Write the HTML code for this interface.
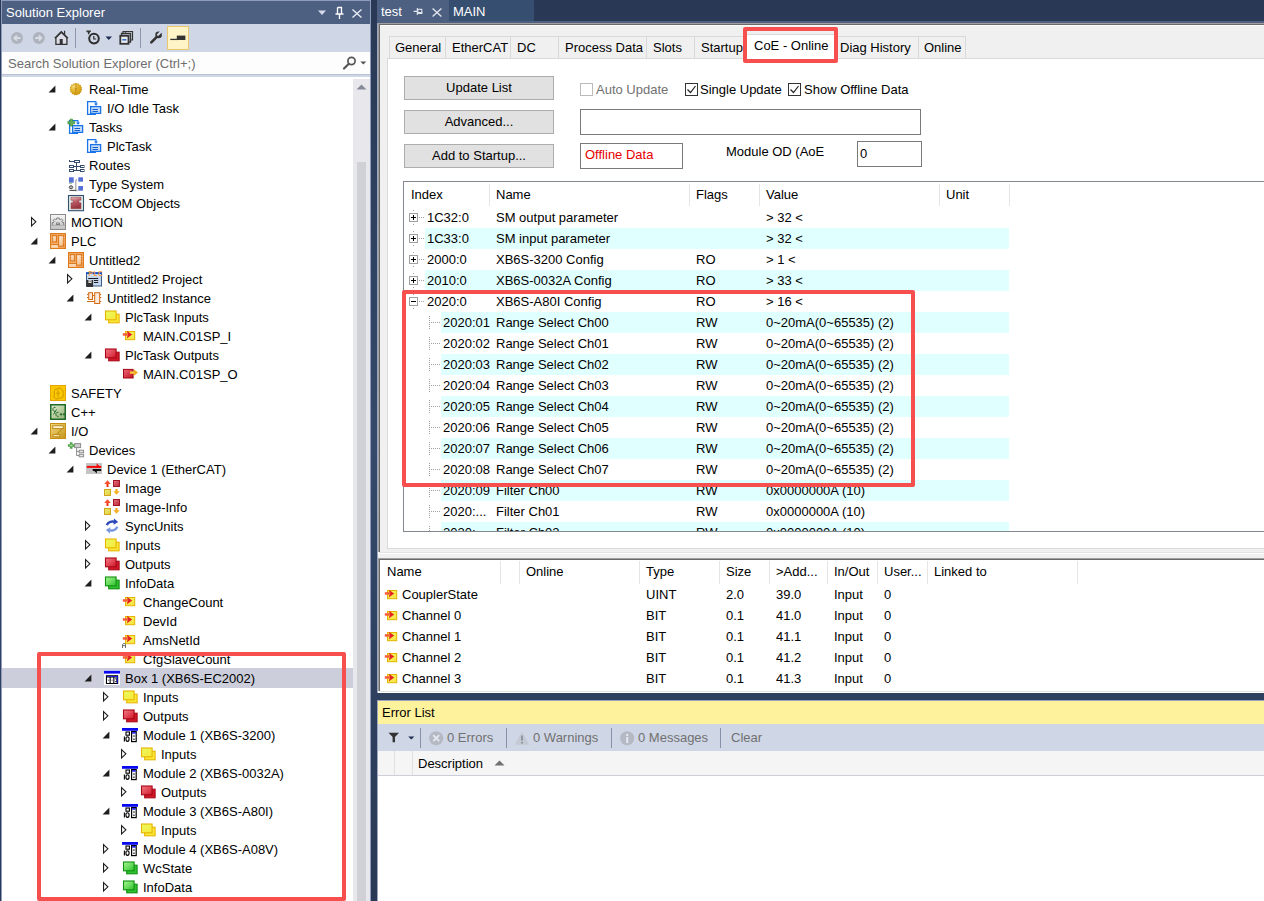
<!DOCTYPE html><html><head><meta charset="utf-8"><title>TwinCAT</title><style>
*{margin:0;padding:0;box-sizing:border-box}
html,body{width:1264px;height:901px;overflow:hidden;background:linear-gradient(#293955,#35496A 50%,#293955);font-family:"Liberation Sans",sans-serif;font-size:13px;color:#000}
.a{position:absolute}
.t{position:absolute;white-space:nowrap;line-height:19px;height:19px}
svg{position:absolute;overflow:visible}
</style></head><body>
<div class="a" style="left:1px;top:0px;width:370px;height:901px;background:#8E9BBC"></div>
<div class="a" style="left:2px;top:1px;width:368px;height:23px;background:#4D6082"></div>
<div class="t" style="left:6px;top:3px;line-height:19px;height:19px;color:#fff">Solution Explorer</div>
<svg style="left:318px;top:10px" width="9" height="6" viewBox="0 0 9 6"><path d="M0 0.5h8l-4 4.5z" fill="#D6DBE9"/></svg>
<svg style="left:335px;top:7px" width="9" height="12" viewBox="0 0 9 12"><path d="M2.5 0.5h4v6M2.5 0.5v6M0.5 7h8M4.5 7v5" stroke="#fff" stroke-width="1.3" fill="none"/><rect x="2.5" y="0.5" width="4" height="6.5" fill="#fff" fill-opacity="0.0"/></svg>
<svg style="left:352px;top:9px" width="10" height="9" viewBox="0 0 10 9"><path d="M0.5 0.5l9 8M9.5 0.5l-9 8" stroke="#E8EBF2" stroke-width="1.4"/></svg>
<div class="a" style="left:2px;top:24px;width:368px;height:28px;background:#CFD6E5"></div>
<svg style="left:10px;top:31px" width="14" height="14" viewBox="0 0 14 14"><circle cx="7" cy="7" r="6" fill="#AEB3BE"/><path d="M10.5 7h-6M7 4.3L4.2 7 7 9.7" stroke="#D8DCE4" stroke-width="1.8" fill="none"/></svg>
<svg style="left:32px;top:31px" width="14" height="14" viewBox="0 0 14 14"><circle cx="6.8" cy="7" r="6" fill="#AEB3BE"/><path d="M3.3 7h6M6.8 4.3L9.6 7 6.8 9.7" stroke="#D8DCE4" stroke-width="1.8" fill="none"/></svg>
<svg style="left:54px;top:30px" width="15" height="16" viewBox="0 0 15 16"><path d="M1.9 14.3V7.6L7.3 2.2 12.9 7.6V14.3z" fill="#DCDCE8" stroke="#333" stroke-width="1.3"/><path d="M0.8 8.3L7.3 1.7 13.8 8.3" fill="none" stroke="#333" stroke-width="1.5"/><path d="M10.6 0.8v4" stroke="#333" stroke-width="1.2"/><rect x="5.7" y="9" width="3" height="5.6" fill="#333"/></svg>
<div class="a" style="left:75px;top:28px;width:1px;height:20px;background:#8A97AE"></div>
<svg style="left:86px;top:30px" width="16" height="16" viewBox="0 0 16 16"><path d="M0.3 1.2h4.6M2.6 1.2v3" stroke="#333" stroke-width="1.3"/><path d="M0.8 1.3L4.6 1.3 2.7 4z" fill="#333"/><circle cx="8" cy="8.6" r="4.8" fill="none" stroke="#2D2D2D" stroke-width="2"/><path d="M7.8 6v3h2.4" stroke="#2D2D2D" stroke-width="1.2" fill="none"/></svg>
<svg style="left:105px;top:36px" width="8" height="5" viewBox="0 0 8 5"><path d="M0.5 0.5h6.5L3.75 4z" fill="#1E2D50"/></svg>
<svg style="left:119px;top:30px" width="15" height="15" viewBox="0 0 15 15"><path d="M4 4V1.5h9.5V10H11M6.5 2.8V1.5" stroke="#333" stroke-width="1.2" fill="none"/><path d="M2.5 6.5V3.5h9V12H9" stroke="#333" stroke-width="1.3" fill="none"/><rect x="1.3" y="5.8" width="8.2" height="8" fill="#E8EAF0" stroke="#333" stroke-width="1.8"/><path d="M3.3 9.8h4" stroke="#2060C0" stroke-width="1.4"/></svg>
<div class="a" style="left:140px;top:28px;width:1px;height:20px;background:#8A97AE"></div>
<svg style="left:150px;top:31px" width="13" height="13" viewBox="0 0 13 13"><path d="M1.3 11.3L6.3 6.3" stroke="#333" stroke-width="2.6" stroke-linecap="round"/><circle cx="8.6" cy="3.9" r="3.3" fill="#333"/><path d="M8 3.8L11.5 0.3" stroke="#CFD6E5" stroke-width="2.2" stroke-linecap="round"/></svg>
<div class="a" style="left:167px;top:26px;width:22px;height:24px;background:#FFF3C8;border:1px solid #E8C770"></div>
<svg style="left:170px;top:35px" width="16" height="6" viewBox="0 0 16 6"><rect x="6.8" y="0.6" width="8.6" height="4.4" fill="#333"/><path d="M0.3 4.4h8" stroke="#333" stroke-width="1.3"/></svg>
<div class="a" style="left:2px;top:52px;width:368px;height:22px;background:#FDFDFD"></div>
<div class="t" style="left:8px;top:54px;line-height:19px;height:19px;color:#6D6D6D">Search Solution Explorer (Ctrl+;)</div>
<svg style="left:342px;top:55px" width="16" height="16" viewBox="0 0 16 16"><circle cx="9.5" cy="6" r="3.6" fill="none" stroke="#555" stroke-width="1.7"/><path d="M2 13.5L6.6 9" stroke="#555" stroke-width="2.2" stroke-linecap="round"/></svg>
<svg style="left:360px;top:61px" width="7" height="5" viewBox="0 0 7 5"><path d="M0.3 0.5h6L3.3 3.5z" fill="#555"/></svg>
<div class="a" style="left:2px;top:74px;width:368px;height:1px;background:#BAC1D0"></div>
<div class="a" style="left:2px;top:75px;width:368px;height:2px;background:#CFD6E5"></div>
<div class="a" style="left:2px;top:77px;width:368px;height:824px;background:#fff"></div>
<div class="a" style="left:353px;top:79px;width:17px;height:822px;background:#E8E8EC"></div>
<div class="a" style="left:357px;top:162px;width:9px;height:739px;background:#D0D1D7"></div>
<svg style="left:356px;top:84px" width="11" height="6" viewBox="0 0 11 6"><path d="M0.5 5.5l5-5 5 5z" fill="#868999"/></svg>
<div class="a" style="left:2px;top:77px;width:351px;height:824px;overflow:hidden">
<svg style="left:46px;top:8px" width="8" height="8"><path d="M7.4 0.6V7.4H0.6z" fill="#1E1E1E"/></svg>
<svg style="left:66px;top:4px" width="16" height="16" viewBox="0 0 16 16"><defs><radialGradient id="gg" cx="0.35" cy="0.3" r="0.75"><stop offset="0" stop-color="#F8E08A"/><stop offset="0.45" stop-color="#E4B42C"/><stop offset="1" stop-color="#CC9A10"/></radialGradient></defs><circle cx="7.9" cy="8.1" r="5.7" fill="url(#gg)"/><circle cx="7.9" cy="8.1" r="5.6" fill="none" stroke="#CF9A14" stroke-width="1.1" stroke-dasharray="1.3 1.0"/><path d="M7.9 2.4v11.4M6.6 6.8l1.3 1.6 1.3-1.6" stroke="#C08A14" stroke-width="0.9" fill="none"/></svg>
<div class="t" style="left:87px;top:3px">Real-Time</div>
<svg style="left:84px;top:23px" width="16" height="16" viewBox="0 0 16 16"><path d="M10 1.6H1.6V14.4H10" stroke="#1874E8" stroke-width="1.3" fill="none"/><rect x="4.6" y="6.6" width="10" height="6.8" fill="#C8DCF8" stroke="#1874E8" stroke-width="1.3"/><path d="M6.5 9.5h5.5M6.5 11.5h5.5" stroke="#1060D0" stroke-width="1.1"/><path d="M10 1.2v3.6" stroke="#1874E8" stroke-width="1.2"/><path d="M8 3.6h4l-2 2.2z" fill="#1874E8"/></svg>
<div class="t" style="left:105px;top:22px">I/O Idle Task</div>
<svg style="left:46px;top:46px" width="8" height="8"><path d="M7.4 0.6V7.4H0.6z" fill="#1E1E1E"/></svg>
<svg style="left:66px;top:42px" width="16" height="16" viewBox="0 0 16 16"><path d="M10 1.6H1.6V14.4H10" stroke="#1874E8" stroke-width="1.3" fill="none"/><rect x="4.6" y="6.6" width="10" height="6.8" fill="#C8DCF8" stroke="#1874E8" stroke-width="1.3"/><path d="M6.5 9.5h5.5M6.5 11.5h5.5" stroke="#1060D0" stroke-width="1.1"/><path d="M10 1.2v3.6" stroke="#1874E8" stroke-width="1.2"/><path d="M8 3.6h4l-2 2.2z" fill="#1874E8"/><path d="M2.1 0.2h2.4v2.2h2.2v2.4H4.5v2.2H2.1V4.8H-0.1V2.4h2.2z" fill="#62B058" stroke="#3C8C36" stroke-width="0.7"/></svg>
<div class="t" style="left:87px;top:41px">Tasks</div>
<svg style="left:84px;top:61px" width="16" height="16" viewBox="0 0 16 16"><path d="M10 1.6H1.6V14.4H10" stroke="#1874E8" stroke-width="1.3" fill="none"/><rect x="4.6" y="6.6" width="10" height="6.8" fill="#C8DCF8" stroke="#1874E8" stroke-width="1.3"/><path d="M6.5 9.5h5.5M6.5 11.5h5.5" stroke="#1060D0" stroke-width="1.1"/><path d="M10 1.2v3.6" stroke="#1874E8" stroke-width="1.2"/><path d="M8 3.6h4l-2 2.2z" fill="#1874E8"/></svg>
<div class="t" style="left:105px;top:60px">PlcTask</div>
<svg style="left:66px;top:80px" width="16" height="16" viewBox="0 0 16 16"><g stroke="#34506E" stroke-width="1" fill="#fff"><path d="M1.5 3v2M1.5 4.5H6.5M8.5 5.5V13.5M5.5 9.5h7M5.5 13.5h7" fill="none"/><rect x="6.5" y="3.5" width="5" height="2"/><rect x="1.5" y="8.5" width="4" height="2"/><rect x="12.5" y="8.5" width="3.5" height="2"/><rect x="1.5" y="12.5" width="4" height="2"/><rect x="12.5" y="12.5" width="3.5" height="2"/></g></svg>
<div class="t" style="left:87px;top:79px">Routes</div>
<svg style="left:66px;top:99px" width="16" height="16" viewBox="0 0 16 16"><rect x="1" y="1.3" width="4.7" height="5.4" fill="#5570D6"/><rect x="10.3" y="1.3" width="4.7" height="4.4" fill="#5570D6"/><rect x="10.3" y="10" width="4.7" height="4.7" fill="#5570D6"/><path d="M9 3.4L7.8 4.4v10.1H9.6" stroke="#ABABAB" stroke-width="1.3" fill="none"/><path d="M1.5 14.4h6.5" stroke="#3C3C3C" stroke-width="1"/><ellipse cx="3" cy="11.3" rx="1.8" ry="1.4" fill="none" stroke="#444" stroke-width="1"/><path d="M1 7.3h3" stroke="#78B068" stroke-width="0.8"/><path d="M3 9.5v3.5" stroke="#555" stroke-width="0.8"/></svg>
<div class="t" style="left:87px;top:98px">Type System</div>
<svg style="left:66px;top:118px" width="16" height="16" viewBox="0 0 16 16"><defs><linearGradient id="tc" x1="0" y1="0" x2="0.3" y2="1"><stop offset="0" stop-color="#E8B8BC"/><stop offset="0.5" stop-color="#B85A64"/><stop offset="1" stop-color="#963440"/></linearGradient></defs><rect x="0.5" y="0.5" width="15" height="15.2" fill="#DCEBE8" stroke="#34506E" stroke-width="1.1"/><path d="M3 2.2h10v3h-2v2.6h2v6h-10v-6h2v-2.6h-2z" fill="url(#tc)" stroke="#963440" stroke-width="0.5"/></svg>
<div class="t" style="left:87px;top:117px">TcCOM Objects</div>
<svg style="left:29px;top:140px" width="7" height="11"><path d="M0.55 0.6L4.9 4.8L0.55 9z" fill="none" stroke="#1E1E1E" stroke-width="1.1"/></svg>
<svg style="left:48px;top:137px" width="16" height="16" viewBox="0 0 16 16"><defs><linearGradient id="mo" x1="0" y1="0" x2="0" y2="1"><stop offset="0" stop-color="#F6F6F6"/><stop offset="0.7" stop-color="#D2D2D2"/><stop offset="1" stop-color="#C0C0C0"/></linearGradient></defs><rect x="0.5" y="0.5" width="15" height="15" fill="url(#mo)" stroke="#8A8A8A"/><path d="M1 11.3h14" stroke="#A0A0A0" stroke-width="0.8"/><path d="M2.3 10.8V8.6H3.6L4.1 7.3 3.2 6.3 4.6 4.9 5.6 5.7 6.8 5.2V4H9.2V5.2L10.4 5.7 11.4 4.9 12.8 6.3 11.9 7.3 12.4 8.6H13.7V10.8" stroke="#6E6E6E" stroke-width="0.85" fill="none"/><rect x="6.6" y="9" width="2.8" height="1.6" fill="none" stroke="#6E6E6E" stroke-width="0.8"/></svg>
<div class="t" style="left:69px;top:136px">MOTION</div>
<svg style="left:28px;top:160px" width="8" height="8"><path d="M7.4 0.6V7.4H0.6z" fill="#1E1E1E"/></svg>
<svg style="left:48px;top:156px" width="16" height="16" viewBox="0 0 16 16"><defs><linearGradient id="pl" x1="0" y1="0" x2="1" y2="1"><stop offset="0" stop-color="#FFF6EC"/><stop offset="1" stop-color="#F0B070"/></linearGradient></defs><rect x="0.6" y="0.6" width="14.8" height="14.8" fill="#F5B070" stroke="#DC7A1C" stroke-width="1.2"/><rect x="2.6" y="2.6" width="4" height="6.4" fill="url(#pl)" stroke="#DC7A1C" stroke-width="1.1"/><rect x="8.6" y="2.6" width="5" height="10.6" fill="url(#pl)" stroke="#DC7A1C" stroke-width="1.1"/><rect x="1.2" y="11.8" width="6.6" height="3" fill="#FAD8B4"/><path d="M1.2 11.5h7" stroke="#DC7A1C" stroke-width="1"/><path d="M1.5 4.5h1M1.5 7h1M13.6 4.5h1M13.6 7h1M13.6 9.5h1" stroke="#FAD8B4" stroke-width="0.8"/></svg>
<div class="t" style="left:69px;top:155px">PLC</div>
<svg style="left:46px;top:179px" width="8" height="8"><path d="M7.4 0.6V7.4H0.6z" fill="#1E1E1E"/></svg>
<svg style="left:66px;top:175px" width="16" height="16" viewBox="0 0 16 16"><defs><linearGradient id="pl" x1="0" y1="0" x2="1" y2="1"><stop offset="0" stop-color="#FFF6EC"/><stop offset="1" stop-color="#F0B070"/></linearGradient></defs><rect x="0.6" y="0.6" width="14.8" height="14.8" fill="#F5B070" stroke="#DC7A1C" stroke-width="1.2"/><rect x="2.6" y="2.6" width="4" height="6.4" fill="url(#pl)" stroke="#DC7A1C" stroke-width="1.1"/><rect x="8.6" y="2.6" width="5" height="10.6" fill="url(#pl)" stroke="#DC7A1C" stroke-width="1.1"/><rect x="1.2" y="11.8" width="6.6" height="3" fill="#FAD8B4"/><path d="M1.2 11.5h7" stroke="#DC7A1C" stroke-width="1"/><path d="M1.5 4.5h1M1.5 7h1M13.6 4.5h1M13.6 7h1M13.6 9.5h1" stroke="#FAD8B4" stroke-width="0.8"/></svg>
<div class="t" style="left:87px;top:174px">Untitled2</div>
<svg style="left:65px;top:197px" width="7" height="11"><path d="M0.55 0.6L4.9 4.8L0.55 9z" fill="none" stroke="#1E1E1E" stroke-width="1.1"/></svg>
<svg style="left:84px;top:194px" width="16" height="16" viewBox="0 0 16 16"><rect x="0.5" y="2" width="15" height="13" fill="#C4D6F0" stroke="#3E5A86" stroke-width="1"/><rect x="1" y="3" width="14" height="1.5" fill="#E8F0FA"/><rect x="0" y="1.2" width="16" height="2" fill="#1A50D8"/><text x="2.6" y="5" font-size="6.4" font-family="Liberation Sans" font-weight="bold" fill="#F89A28" letter-spacing="0.6">PLC</text><path d="M2.2 7.5h10M8 9.5h4.2M8 11.5h4.2" stroke="#1c1c1c" stroke-width="1"/><rect x="0.3" y="9" width="6.8" height="7" fill="#333"/><rect x="2.5" y="9" width="3" height="3" fill="#F0F0F0"/><rect x="3.6" y="9.5" width="0.9" height="1.7" fill="#333"/></svg>
<div class="t" style="left:105px;top:193px">Untitled2 Project</div>
<svg style="left:64px;top:217px" width="8" height="8"><path d="M7.4 0.6V7.4H0.6z" fill="#1E1E1E"/></svg>
<svg style="left:84px;top:213px" width="16" height="16" viewBox="0 0 16 16"><g fill="#FCEBDC" stroke="#D26A14" stroke-width="1"><rect x="2.7" y="2.7" width="3.8" height="6.8"/><rect x="8.7" y="2.7" width="5" height="10.8"/></g><path d="M1 4.5h1.7M1 7.5h1.7M13.7 4.5h1.5M13.7 7.5h1.5M13.7 11.5h1.5M1 11.5h7.7M6.5 5.5h2.2" stroke="#D26A14" stroke-width="1"/></svg>
<div class="t" style="left:105px;top:212px">Untitled2 Instance</div>
<svg style="left:82px;top:236px" width="8" height="8"><path d="M7.4 0.6V7.4H0.6z" fill="#1E1E1E"/></svg>
<svg style="left:102px;top:232px" width="16" height="16" viewBox="0 0 16 16"><defs><linearGradient id="sy" x1="0" y1="0" x2="1" y2="1"><stop offset="0" stop-color="#E8FA60"/><stop offset="1" stop-color="#F8E838"/></linearGradient></defs><rect x="4.7" y="5.2" width="10.4" height="8.6" fill="#F8E838" stroke="#E8B400" stroke-width="1.1"/><rect x="1.5" y="2" width="10.6" height="8.8" fill="url(#sy)" stroke="#E8B400" stroke-width="1.1"/></svg>
<div class="t" style="left:123px;top:231px">PlcTask Inputs</div>
<svg style="left:120px;top:251px" width="16" height="16" viewBox="0 0 16 16"><defs><linearGradient id="vi" x1="0" y1="0" x2="1" y2="1"><stop offset="0" stop-color="#F4FA60"/><stop offset="1" stop-color="#F8E040"/></linearGradient></defs><rect x="3.5" y="3.5" width="9.2" height="8.2" fill="url(#vi)" stroke="#E4B400" stroke-width="1"/><path d="M0.8 5.2h4.8v2.5H0.8z" fill="#F45C3C"/><path d="M4.8 2.7L10.2 6.45 4.8 10.4 5.8 6.45z" fill="#E42424"/></svg>
<div class="t" style="left:141px;top:250px">MAIN.C01SP_I</div>
<svg style="left:82px;top:274px" width="8" height="8"><path d="M7.4 0.6V7.4H0.6z" fill="#1E1E1E"/></svg>
<svg style="left:102px;top:270px" width="16" height="16" viewBox="0 0 16 16"><defs><linearGradient id="sr" x1="0" y1="0" x2="1" y2="1"><stop offset="0" stop-color="#F47A88"/><stop offset="1" stop-color="#D01828"/></linearGradient></defs><rect x="4.7" y="5.2" width="10.4" height="8.6" fill="#D01828" stroke="#A80818" stroke-width="1.1"/><rect x="1.5" y="2" width="10.6" height="8.8" fill="url(#sr)" stroke="#A80818" stroke-width="1.1"/></svg>
<div class="t" style="left:123px;top:269px">PlcTask Outputs</div>
<svg style="left:120px;top:289px" width="16" height="16" viewBox="0 0 16 16"><defs><linearGradient id="vo" x1="0" y1="0" x2="1" y2="1"><stop offset="0" stop-color="#F06878"/><stop offset="1" stop-color="#C01020"/></linearGradient></defs><rect x="1.5" y="3.4" width="9.6" height="8.6" fill="url(#vo)" stroke="#A00818" stroke-width="1"/><path d="M8 5.4h4.4v2.4H8z" fill="#F8C838"/><path d="M11.4 3L16 6.6 11.4 10.2 12.3 6.6z" fill="#F0A818"/></svg>
<div class="t" style="left:141px;top:288px">MAIN.C01SP_O</div>
<svg style="left:48px;top:308px" width="16" height="16" viewBox="0 0 16 16"><rect x="0.5" y="0.5" width="15" height="15" fill="#FAC800" stroke="#E6A400"/><path d="M4.5 5.5l1-1.5h2l1-1h2l1 1.5 1.5 1v2l0.5 1-0.5 1.5v2l-1.5 1h-2l-1 0.8h-3l-1.5-1.3v-2.5l1-1-1-1z" fill="none" stroke="#CE9000" stroke-width="0.9"/><path d="M8 4.5v8M6.5 7.5a1.5 1.5 0 1 0 3 0" stroke="#CE9000" stroke-width="0.8" fill="none"/></svg>
<div class="t" style="left:69px;top:307px">SAFETY</div>
<svg style="left:48px;top:327px" width="16" height="16" viewBox="0 0 16 16"><defs><linearGradient id="cp" x1="0" y1="0" x2="1" y2="1"><stop offset="0" stop-color="#E6EED4"/><stop offset="1" stop-color="#8EAE70"/></linearGradient></defs><rect x="0.75" y="0.75" width="14.5" height="14.5" fill="url(#cp)" stroke="#1E6A28" stroke-width="1.5"/><path d="M5.5 3.3h-1.5l-1 1v2l1 1h1.5M6.5 5.5l-3 5M8.5 8.3h-1.5l-1 1v2l1 1h1.5" stroke="#1E6A28" stroke-width="1" fill="none"/><path d="M9.8 10.3h2.5M11 9v2.6M13 10.3h2M14 9.2v2.2" stroke="#1E6A28" stroke-width="1"/></svg>
<div class="t" style="left:69px;top:326px">C++</div>
<svg style="left:28px;top:350px" width="8" height="8"><path d="M7.4 0.6V7.4H0.6z" fill="#1E1E1E"/></svg>
<svg style="left:48px;top:346px" width="16" height="16" viewBox="0 0 16 16"><defs><linearGradient id="iog" x1="0" y1="0" x2="1" y2="1"><stop offset="0" stop-color="#F4DA80"/><stop offset="1" stop-color="#C49418"/></linearGradient></defs><rect x="0.5" y="0.5" width="15" height="15" fill="url(#iog)" stroke="#C89012"/><rect x="2.8" y="2.8" width="10.4" height="2.8" fill="#FFF6D8" stroke="#B88410" stroke-width="0.9"/><path d="M12 6L7 11.2" stroke="#B88410" stroke-width="1"/><rect x="2.8" y="11.6" width="7" height="2.2" fill="#F8E8B0" stroke="#B88410" stroke-width="0.9"/></svg>
<div class="t" style="left:69px;top:345px">I/O</div>
<svg style="left:46px;top:369px" width="8" height="8"><path d="M7.4 0.6V7.4H0.6z" fill="#1E1E1E"/></svg>
<svg style="left:66px;top:365px" width="16" height="16" viewBox="0 0 16 16"><rect x="6.6" y="1.6" width="6" height="4" fill="#CFCFCF" stroke="#8E8E8E" stroke-width="1"/><path d="M8.6 5.6v8M8.6 9.4h2.6M8.6 13.5h2.6" stroke="#8E8E8E" stroke-width="1" fill="none"/><rect x="11.2" y="8.2" width="4.4" height="2.6" fill="#E6E6E6" stroke="#8E8E8E" stroke-width="1"/><rect x="11.2" y="12.3" width="4.4" height="2.5" fill="#E6E6E6" stroke="#8E8E8E" stroke-width="1"/><path d="M3.2 0.2v6.6M-0.1 3.5h6.6" stroke="#50A048" stroke-width="2.6"/><path d="M3.2 1.8v3.4M1.5 3.5h3.4" stroke="#9AD88E" stroke-width="0.9"/></svg>
<div class="t" style="left:87px;top:364px">Devices</div>
<svg style="left:64px;top:388px" width="8" height="8"><path d="M7.4 0.6V7.4H0.6z" fill="#1E1E1E"/></svg>
<svg style="left:84px;top:384px" width="16" height="16" viewBox="0 0 16 16"><rect x="0" y="2" width="16" height="11" fill="#C4C4C4"/><path d="M0.8 5.9h14.4" stroke="#F40808" stroke-width="2"/><path d="M10.6 2.2L15.3 6.9h-4.7z" fill="#F40808"/><path d="M6.8 9h8.4" stroke="#080808" stroke-width="1.9"/><path d="M6.4 8.1l4.4 4.3v-4.3z" fill="#080808"/></svg>
<div class="t" style="left:105px;top:383px">Device 1 (EtherCAT)</div>
<svg style="left:102px;top:403px" width="16" height="16" viewBox="0 0 16 16"><defs><linearGradient id="imr" x1="0" y1="0" x2="1" y2="1"><stop offset="0" stop-color="#E87080"/><stop offset="1" stop-color="#B82838"/></linearGradient><linearGradient id="imy" x1="0" y1="0" x2="1" y2="1"><stop offset="0" stop-color="#E8F070"/><stop offset="1" stop-color="#E8C840"/></linearGradient></defs><rect x="9.5" y="0.5" width="6" height="6" fill="url(#imr)" stroke="#A01828" stroke-width="1"/><path d="M3.5 7V3.5" stroke="#F03010" stroke-width="2"/><path d="M0.2 4L3.5 0.3 6.8 4z" fill="#F85030"/><rect x="0.5" y="9.5" width="6" height="6" fill="url(#imy)" stroke="#D0A820" stroke-width="1"/><path d="M12.5 9v3" stroke="#F0A010" stroke-width="2"/><path d="M9.3 11.2l3.2 3.6 3.2-3.6z" fill="#F8B020"/></svg>
<div class="t" style="left:123px;top:402px">Image</div>
<svg style="left:102px;top:422px" width="16" height="16" viewBox="0 0 16 16"><defs><linearGradient id="imr" x1="0" y1="0" x2="1" y2="1"><stop offset="0" stop-color="#E87080"/><stop offset="1" stop-color="#B82838"/></linearGradient><linearGradient id="imy" x1="0" y1="0" x2="1" y2="1"><stop offset="0" stop-color="#E8F070"/><stop offset="1" stop-color="#E8C840"/></linearGradient></defs><rect x="9.5" y="0.5" width="6" height="6" fill="url(#imr)" stroke="#A01828" stroke-width="1"/><path d="M3.5 7V3.5" stroke="#F03010" stroke-width="2"/><path d="M0.2 4L3.5 0.3 6.8 4z" fill="#F85030"/><rect x="0.5" y="9.5" width="6" height="6" fill="url(#imy)" stroke="#D0A820" stroke-width="1"/><path d="M12.5 9v3" stroke="#F0A010" stroke-width="2"/><path d="M9.3 11.2l3.2 3.6 3.2-3.6z" fill="#F8B020"/></svg>
<div class="t" style="left:123px;top:421px">Image-Info</div>
<svg style="left:83px;top:444px" width="7" height="11"><path d="M0.55 0.6L4.9 4.8L0.55 9z" fill="none" stroke="#1E1E1E" stroke-width="1.1"/></svg>
<svg style="left:102px;top:441px" width="16" height="16" viewBox="0 0 16 16"><path d="M2.8 7.2C4 4 8 2.6 11.6 4" stroke="#2C48B8" stroke-width="2.4" fill="none"/><path d="M10 0.5l4.2 3.6-4.6 2.6z" fill="#2C48B8"/><path d="M13.4 8.8C12 12 8 13.4 4.4 12" stroke="#7A98E0" stroke-width="2.4" fill="none"/><path d="M6 15.5l-4.2-3.6 4.6-2.6z" fill="#7A98E0"/></svg>
<div class="t" style="left:123px;top:440px">SyncUnits</div>
<svg style="left:83px;top:463px" width="7" height="11"><path d="M0.55 0.6L4.9 4.8L0.55 9z" fill="none" stroke="#1E1E1E" stroke-width="1.1"/></svg>
<svg style="left:102px;top:460px" width="16" height="16" viewBox="0 0 16 16"><defs><linearGradient id="sy" x1="0" y1="0" x2="1" y2="1"><stop offset="0" stop-color="#E8FA60"/><stop offset="1" stop-color="#F8E838"/></linearGradient></defs><rect x="4.7" y="5.2" width="10.4" height="8.6" fill="#F8E838" stroke="#E8B400" stroke-width="1.1"/><rect x="1.5" y="2" width="10.6" height="8.8" fill="url(#sy)" stroke="#E8B400" stroke-width="1.1"/></svg>
<div class="t" style="left:123px;top:459px">Inputs</div>
<svg style="left:83px;top:482px" width="7" height="11"><path d="M0.55 0.6L4.9 4.8L0.55 9z" fill="none" stroke="#1E1E1E" stroke-width="1.1"/></svg>
<svg style="left:102px;top:479px" width="16" height="16" viewBox="0 0 16 16"><defs><linearGradient id="sr" x1="0" y1="0" x2="1" y2="1"><stop offset="0" stop-color="#F47A88"/><stop offset="1" stop-color="#D01828"/></linearGradient></defs><rect x="4.7" y="5.2" width="10.4" height="8.6" fill="#D01828" stroke="#A80818" stroke-width="1.1"/><rect x="1.5" y="2" width="10.6" height="8.8" fill="url(#sr)" stroke="#A80818" stroke-width="1.1"/></svg>
<div class="t" style="left:123px;top:478px">Outputs</div>
<svg style="left:82px;top:502px" width="8" height="8"><path d="M7.4 0.6V7.4H0.6z" fill="#1E1E1E"/></svg>
<svg style="left:102px;top:498px" width="16" height="16" viewBox="0 0 16 16"><defs><linearGradient id="sg" x1="0" y1="0" x2="1" y2="1"><stop offset="0" stop-color="#A8F890"/><stop offset="1" stop-color="#30C030"/></linearGradient></defs><rect x="4.7" y="5.2" width="10.4" height="8.6" fill="#30C030" stroke="#109010" stroke-width="1.1"/><rect x="1.5" y="2" width="10.6" height="8.8" fill="url(#sg)" stroke="#109010" stroke-width="1.1"/></svg>
<div class="t" style="left:123px;top:497px">InfoData</div>
<svg style="left:120px;top:517px" width="16" height="16" viewBox="0 0 16 16"><defs><linearGradient id="vi" x1="0" y1="0" x2="1" y2="1"><stop offset="0" stop-color="#F4FA60"/><stop offset="1" stop-color="#F8E040"/></linearGradient></defs><rect x="3.5" y="3.5" width="9.2" height="8.2" fill="url(#vi)" stroke="#E4B400" stroke-width="1"/><path d="M0.8 5.2h4.8v2.5H0.8z" fill="#F45C3C"/><path d="M4.8 2.7L10.2 6.45 4.8 10.4 5.8 6.45z" fill="#E42424"/></svg>
<div class="t" style="left:141px;top:516px">ChangeCount</div>
<svg style="left:120px;top:536px" width="16" height="16" viewBox="0 0 16 16"><defs><linearGradient id="vi" x1="0" y1="0" x2="1" y2="1"><stop offset="0" stop-color="#F4FA60"/><stop offset="1" stop-color="#F8E040"/></linearGradient></defs><rect x="3.5" y="3.5" width="9.2" height="8.2" fill="url(#vi)" stroke="#E4B400" stroke-width="1"/><path d="M0.8 5.2h4.8v2.5H0.8z" fill="#F45C3C"/><path d="M4.8 2.7L10.2 6.45 4.8 10.4 5.8 6.45z" fill="#E42424"/></svg>
<div class="t" style="left:141px;top:535px">DevId</div>
<svg style="left:120px;top:555px" width="16" height="16" viewBox="0 0 16 16"><defs><linearGradient id="vi" x1="0" y1="0" x2="1" y2="1"><stop offset="0" stop-color="#F4FA60"/><stop offset="1" stop-color="#F8E040"/></linearGradient></defs><rect x="3.5" y="3.5" width="9.2" height="8.2" fill="url(#vi)" stroke="#E4B400" stroke-width="1"/><path d="M0.8 5.2h4.8v2.5H0.8z" fill="#F45C3C"/><path d="M4.8 2.7L10.2 6.45 4.8 10.4 5.8 6.45z" fill="#E42424"/></svg>
<div class="t" style="left:141px;top:554px">AmsNetId</div>
<svg style="left:120px;top:566px" width="5" height="6"><path d="M0.5 5V1.2M3.5 5V1.2M1 0.6h2M1 2.6h2" stroke="#6E6E6E" stroke-width="1"/></svg>
<svg style="left:120px;top:574px" width="16" height="16" viewBox="0 0 16 16"><defs><linearGradient id="vi" x1="0" y1="0" x2="1" y2="1"><stop offset="0" stop-color="#F4FA60"/><stop offset="1" stop-color="#F8E040"/></linearGradient></defs><rect x="3.5" y="3.5" width="9.2" height="8.2" fill="url(#vi)" stroke="#E4B400" stroke-width="1"/><path d="M0.8 5.2h4.8v2.5H0.8z" fill="#F45C3C"/><path d="M4.8 2.7L10.2 6.45 4.8 10.4 5.8 6.45z" fill="#E42424"/></svg>
<div class="t" style="left:141px;top:573px">CfgSlaveCount</div>
<div class="a" style="left:0px;top:591px;width:351px;height:20px;background:#CCCEDB"></div>
<svg style="left:82px;top:597px" width="8" height="8"><path d="M7.4 0.6V7.4H0.6z" fill="#1E1E1E"/></svg>
<svg style="left:102px;top:593px" width="16" height="16" viewBox="0 0 16 16"><rect x="0" y="0.5" width="16" height="14.5" fill="#fff"/><rect x="0" y="0.8" width="16" height="2.8" fill="#0A0AF0"/><rect x="1.9" y="5.2" width="12.3" height="8.8" fill="#000"/><rect x="3" y="6" width="10" height="0.9" fill="#2020E8"/><path d="M3 7.6h2.6v5.3H3zM6.7 7.6h2.6v5.3H6.7zM10.4 7.6h2.4v5.3h-2.4z" fill="#fff"/><path d="M3.9 10.2h1M7.6 10.2h1M11.1 8.8h1.7v2.8h-1.7" stroke="#000" stroke-width="0.8" fill="none"/><rect x="12.8" y="6" width="1" height="7.5" fill="#1010F0"/></svg>
<div class="t" style="left:123px;top:592px">Box 1 (XB6S-EC2002)</div>
<svg style="left:101px;top:615px" width="7" height="11"><path d="M0.55 0.6L4.9 4.8L0.55 9z" fill="none" stroke="#1E1E1E" stroke-width="1.1"/></svg>
<svg style="left:120px;top:612px" width="16" height="16" viewBox="0 0 16 16"><defs><linearGradient id="sy" x1="0" y1="0" x2="1" y2="1"><stop offset="0" stop-color="#E8FA60"/><stop offset="1" stop-color="#F8E838"/></linearGradient></defs><rect x="4.7" y="5.2" width="10.4" height="8.6" fill="#F8E838" stroke="#E8B400" stroke-width="1.1"/><rect x="1.5" y="2" width="10.6" height="8.8" fill="url(#sy)" stroke="#E8B400" stroke-width="1.1"/></svg>
<div class="t" style="left:141px;top:611px">Inputs</div>
<svg style="left:101px;top:634px" width="7" height="11"><path d="M0.55 0.6L4.9 4.8L0.55 9z" fill="none" stroke="#1E1E1E" stroke-width="1.1"/></svg>
<svg style="left:120px;top:631px" width="16" height="16" viewBox="0 0 16 16"><defs><linearGradient id="sr" x1="0" y1="0" x2="1" y2="1"><stop offset="0" stop-color="#F47A88"/><stop offset="1" stop-color="#D01828"/></linearGradient></defs><rect x="4.7" y="5.2" width="10.4" height="8.6" fill="#D01828" stroke="#A80818" stroke-width="1.1"/><rect x="1.5" y="2" width="10.6" height="8.8" fill="url(#sr)" stroke="#A80818" stroke-width="1.1"/></svg>
<div class="t" style="left:141px;top:630px">Outputs</div>
<svg style="left:100px;top:654px" width="8" height="8"><path d="M7.4 0.6V7.4H0.6z" fill="#1E1E1E"/></svg>
<svg style="left:120px;top:650px" width="16" height="16" viewBox="0 0 16 16"><rect x="0" y="1" width="16" height="2.8" fill="#0A0AF0"/><rect x="4" y="5" width="3.4" height="3.2" fill="none" stroke="#000" stroke-width="1.1"/><path d="M2.4 9.6v5" stroke="#000" stroke-width="1.1"/><ellipse cx="5.5" cy="12.1" rx="1.6" ry="2.3" fill="none" stroke="#000" stroke-width="1.1"/><rect x="9.6" y="4.6" width="4.6" height="10" fill="#fff" stroke="#000" stroke-width="1.2"/><rect x="10.2" y="5.1" width="3.4" height="1.6" fill="#1010F0"/><rect x="11.3" y="8.4" width="1.3" height="1.3" fill="#000"/><rect x="11.3" y="11.6" width="1.3" height="1.3" fill="#000"/></svg>
<div class="t" style="left:141px;top:649px">Module 1 (XB6S-3200)</div>
<svg style="left:119px;top:672px" width="7" height="11"><path d="M0.55 0.6L4.9 4.8L0.55 9z" fill="none" stroke="#1E1E1E" stroke-width="1.1"/></svg>
<svg style="left:138px;top:669px" width="16" height="16" viewBox="0 0 16 16"><defs><linearGradient id="sy" x1="0" y1="0" x2="1" y2="1"><stop offset="0" stop-color="#E8FA60"/><stop offset="1" stop-color="#F8E838"/></linearGradient></defs><rect x="4.7" y="5.2" width="10.4" height="8.6" fill="#F8E838" stroke="#E8B400" stroke-width="1.1"/><rect x="1.5" y="2" width="10.6" height="8.8" fill="url(#sy)" stroke="#E8B400" stroke-width="1.1"/></svg>
<div class="t" style="left:159px;top:668px">Inputs</div>
<svg style="left:100px;top:692px" width="8" height="8"><path d="M7.4 0.6V7.4H0.6z" fill="#1E1E1E"/></svg>
<svg style="left:120px;top:688px" width="16" height="16" viewBox="0 0 16 16"><rect x="0" y="1" width="16" height="2.8" fill="#0A0AF0"/><rect x="4" y="5" width="3.4" height="3.2" fill="none" stroke="#000" stroke-width="1.1"/><path d="M2.4 9.6v5" stroke="#000" stroke-width="1.1"/><ellipse cx="5.5" cy="12.1" rx="1.6" ry="2.3" fill="none" stroke="#000" stroke-width="1.1"/><rect x="9.6" y="4.6" width="4.6" height="10" fill="#fff" stroke="#000" stroke-width="1.2"/><rect x="10.2" y="5.1" width="3.4" height="1.6" fill="#1010F0"/><rect x="11.3" y="8.4" width="1.3" height="1.3" fill="#000"/><rect x="11.3" y="11.6" width="1.3" height="1.3" fill="#000"/></svg>
<div class="t" style="left:141px;top:687px">Module 2 (XB6S-0032A)</div>
<svg style="left:119px;top:710px" width="7" height="11"><path d="M0.55 0.6L4.9 4.8L0.55 9z" fill="none" stroke="#1E1E1E" stroke-width="1.1"/></svg>
<svg style="left:138px;top:707px" width="16" height="16" viewBox="0 0 16 16"><defs><linearGradient id="sr" x1="0" y1="0" x2="1" y2="1"><stop offset="0" stop-color="#F47A88"/><stop offset="1" stop-color="#D01828"/></linearGradient></defs><rect x="4.7" y="5.2" width="10.4" height="8.6" fill="#D01828" stroke="#A80818" stroke-width="1.1"/><rect x="1.5" y="2" width="10.6" height="8.8" fill="url(#sr)" stroke="#A80818" stroke-width="1.1"/></svg>
<div class="t" style="left:159px;top:706px">Outputs</div>
<svg style="left:100px;top:730px" width="8" height="8"><path d="M7.4 0.6V7.4H0.6z" fill="#1E1E1E"/></svg>
<svg style="left:120px;top:726px" width="16" height="16" viewBox="0 0 16 16"><rect x="0" y="1" width="16" height="2.8" fill="#0A0AF0"/><rect x="4" y="5" width="3.4" height="3.2" fill="none" stroke="#000" stroke-width="1.1"/><path d="M2.4 9.6v5" stroke="#000" stroke-width="1.1"/><ellipse cx="5.5" cy="12.1" rx="1.6" ry="2.3" fill="none" stroke="#000" stroke-width="1.1"/><rect x="9.6" y="4.6" width="4.6" height="10" fill="#fff" stroke="#000" stroke-width="1.2"/><rect x="10.2" y="5.1" width="3.4" height="1.6" fill="#1010F0"/><rect x="11.3" y="8.4" width="1.3" height="1.3" fill="#000"/><rect x="11.3" y="11.6" width="1.3" height="1.3" fill="#000"/></svg>
<div class="t" style="left:141px;top:725px">Module 3 (XB6S-A80I)</div>
<svg style="left:119px;top:748px" width="7" height="11"><path d="M0.55 0.6L4.9 4.8L0.55 9z" fill="none" stroke="#1E1E1E" stroke-width="1.1"/></svg>
<svg style="left:138px;top:745px" width="16" height="16" viewBox="0 0 16 16"><defs><linearGradient id="sy" x1="0" y1="0" x2="1" y2="1"><stop offset="0" stop-color="#E8FA60"/><stop offset="1" stop-color="#F8E838"/></linearGradient></defs><rect x="4.7" y="5.2" width="10.4" height="8.6" fill="#F8E838" stroke="#E8B400" stroke-width="1.1"/><rect x="1.5" y="2" width="10.6" height="8.8" fill="url(#sy)" stroke="#E8B400" stroke-width="1.1"/></svg>
<div class="t" style="left:159px;top:744px">Inputs</div>
<svg style="left:101px;top:767px" width="7" height="11"><path d="M0.55 0.6L4.9 4.8L0.55 9z" fill="none" stroke="#1E1E1E" stroke-width="1.1"/></svg>
<svg style="left:120px;top:764px" width="16" height="16" viewBox="0 0 16 16"><rect x="0" y="1" width="16" height="2.8" fill="#0A0AF0"/><rect x="4" y="5" width="3.4" height="3.2" fill="none" stroke="#000" stroke-width="1.1"/><path d="M2.4 9.6v5" stroke="#000" stroke-width="1.1"/><ellipse cx="5.5" cy="12.1" rx="1.6" ry="2.3" fill="none" stroke="#000" stroke-width="1.1"/><rect x="9.6" y="4.6" width="4.6" height="10" fill="#fff" stroke="#000" stroke-width="1.2"/><rect x="10.2" y="5.1" width="3.4" height="1.6" fill="#1010F0"/><rect x="11.3" y="8.4" width="1.3" height="1.3" fill="#000"/><rect x="11.3" y="11.6" width="1.3" height="1.3" fill="#000"/></svg>
<div class="t" style="left:141px;top:763px">Module 4 (XB6S-A08V)</div>
<svg style="left:101px;top:786px" width="7" height="11"><path d="M0.55 0.6L4.9 4.8L0.55 9z" fill="none" stroke="#1E1E1E" stroke-width="1.1"/></svg>
<svg style="left:120px;top:783px" width="16" height="16" viewBox="0 0 16 16"><defs><linearGradient id="sg" x1="0" y1="0" x2="1" y2="1"><stop offset="0" stop-color="#A8F890"/><stop offset="1" stop-color="#30C030"/></linearGradient></defs><rect x="4.7" y="5.2" width="10.4" height="8.6" fill="#30C030" stroke="#109010" stroke-width="1.1"/><rect x="1.5" y="2" width="10.6" height="8.8" fill="url(#sg)" stroke="#109010" stroke-width="1.1"/></svg>
<div class="t" style="left:141px;top:782px">WcState</div>
<svg style="left:101px;top:805px" width="7" height="11"><path d="M0.55 0.6L4.9 4.8L0.55 9z" fill="none" stroke="#1E1E1E" stroke-width="1.1"/></svg>
<svg style="left:120px;top:802px" width="16" height="16" viewBox="0 0 16 16"><defs><linearGradient id="sg" x1="0" y1="0" x2="1" y2="1"><stop offset="0" stop-color="#A8F890"/><stop offset="1" stop-color="#30C030"/></linearGradient></defs><rect x="4.7" y="5.2" width="10.4" height="8.6" fill="#30C030" stroke="#109010" stroke-width="1.1"/><rect x="1.5" y="2" width="10.6" height="8.8" fill="url(#sg)" stroke="#109010" stroke-width="1.1"/></svg>
<div class="t" style="left:141px;top:801px">InfoData</div>
</div>
<div class="a" style="left:377px;top:0px;width:72px;height:21px;background:#4D6082"></div>
<div class="t" style="left:381px;top:2px;line-height:19px;height:19px;color:#fff">test</div>
<svg style="left:413px;top:8px" width="10" height="8" viewBox="0 0 10 8"><path d="M0.6 3.4h3.4M4.3 0v7" stroke="#E0E4EC" stroke-width="1.1" fill="none"/><rect x="4.8" y="1.3" width="4" height="3.6" fill="none" stroke="#E0E4EC" stroke-width="1.1"/><rect x="4.3" y="4" width="5" height="2" fill="#E0E4EC"/></svg>
<svg style="left:432px;top:8px" width="10" height="9" viewBox="0 0 10 9"><path d="M0.6 0.5l8.8 8M9.4 0.5l-8.8 8" stroke="#E0E4EC" stroke-width="1.4"/></svg>
<div class="a" style="left:449px;top:0px;width:85px;height:21px;background:#364E6F"></div>
<div class="t" style="left:453px;top:2px;line-height:19px;height:19px;color:#fff">MAIN</div>
<div class="a" style="left:377px;top:21px;width:887px;height:2px;background:#4D6082"></div>
<div class="a" style="left:377px;top:23px;width:887px;height:531px;background:#9AA5C0"></div>
<div class="a" style="left:378px;top:23px;width:886px;height:531px;background:#A0A0A0"></div>
<div class="a" style="left:379px;top:24px;width:885px;height:530px;background:#696969"></div>
<div class="a" style="left:378px;top:552px;width:886px;height:2px;background:#FFFFFF"></div>
<div class="a" style="left:379px;top:552px;width:885px;height:1px;background:#E3E3E3"></div>
<div class="a" style="left:380px;top:25px;width:884px;height:527px;background:#F0F0F0"></div>
<div class="a" style="left:380px;top:25px;width:884px;height:1px;background:#FAFAFA"></div>
<div class="a" style="left:387px;top:58px;width:877px;height:491px;background:#fff;border:1px solid #DADADA;border-right:none"></div>
<div class="a" style="left:389px;top:36px;width:57px;height:23px;background:#F0F0F0;border:1px solid #D9D9D9"></div>
<div class="t" style="left:395px;top:38px;line-height:19px;height:19px;">General</div>
<div class="a" style="left:445px;top:36px;width:66px;height:23px;background:#F0F0F0;border:1px solid #D9D9D9"></div>
<div class="t" style="left:452px;top:38px;line-height:19px;height:19px;">EtherCAT</div>
<div class="a" style="left:510px;top:36px;width:49px;height:23px;background:#F0F0F0;border:1px solid #D9D9D9"></div>
<div class="t" style="left:517px;top:38px;line-height:19px;height:19px;">DC</div>
<div class="a" style="left:558px;top:36px;width:89px;height:23px;background:#F0F0F0;border:1px solid #D9D9D9"></div>
<div class="t" style="left:565px;top:38px;line-height:19px;height:19px;">Process Data</div>
<div class="a" style="left:646px;top:36px;width:49px;height:23px;background:#F0F0F0;border:1px solid #D9D9D9"></div>
<div class="t" style="left:653px;top:38px;line-height:19px;height:19px;">Slots</div>
<div class="a" style="left:694px;top:36px;width:52px;height:23px;background:#F0F0F0;border:1px solid #D9D9D9"></div>
<div class="t" style="left:701px;top:38px;line-height:19px;height:19px;">Startup</div>
<div class="a" style="left:837px;top:36px;width:82px;height:23px;background:#F0F0F0;border:1px solid #D9D9D9"></div>
<div class="t" style="left:840px;top:38px;line-height:19px;height:19px;">Diag History</div>
<div class="a" style="left:918px;top:36px;width:48px;height:23px;background:#F0F0F0;border:1px solid #D9D9D9"></div>
<div class="t" style="left:924px;top:38px;line-height:19px;height:19px;">Online</div>
<div class="a" style="left:745px;top:34px;width:92px;height:26px;background:#fff;border:1px solid #D9D9D9;border-bottom:none"></div>
<div class="t" style="left:754px;top:36px;line-height:19px;height:19px;">CoE - Online</div>
<div class="a" style="left:404px;top:76px;width:150px;height:24px;background:#E1E1E1;border:1px solid #ADADAD"></div>
<div class="t" style="left:404px;top:78px;width:150px;text-align:center">Update List</div>
<div class="a" style="left:404px;top:110px;width:150px;height:24px;background:#E1E1E1;border:1px solid #ADADAD"></div>
<div class="t" style="left:404px;top:112px;width:150px;text-align:center">Advanced...</div>
<div class="a" style="left:404px;top:144px;width:150px;height:24px;background:#E1E1E1;border:1px solid #ADADAD"></div>
<div class="t" style="left:404px;top:146px;width:150px;text-align:center">Add to Startup...</div>
<div class="a" style="left:580px;top:83px;width:13px;height:13px;background:#fff;border:1px solid #BCBCBC"></div>
<div class="t" style="left:596px;top:80px;line-height:19px;height:19px;color:#717171">Auto Update</div>
<div class="a" style="left:685px;top:83px;width:13px;height:13px;background:#fff;border:1px solid #333"></div>
<svg style="left:685px;top:83px" width="13" height="13" viewBox="0 0 13 13"><path d="M2.5 6.5l3 3 5-6.5" stroke="#222" stroke-width="1.2" fill="none"/></svg>
<div class="t" style="left:700px;top:80px;line-height:19px;height:19px;">Single Update</div>
<div class="a" style="left:788px;top:83px;width:13px;height:13px;background:#fff;border:1px solid #333"></div>
<svg style="left:788px;top:83px" width="13" height="13" viewBox="0 0 13 13"><path d="M2.5 6.5l3 3 5-6.5" stroke="#222" stroke-width="1.2" fill="none"/></svg>
<div class="t" style="left:804px;top:80px;line-height:19px;height:19px;">Show Offline Data</div>
<div class="a" style="left:580px;top:109px;width:341px;height:26px;background:#fff;border:1px solid #7A7A7A"></div>
<div class="a" style="left:580px;top:143px;width:103px;height:26px;background:#fff;border:1px solid #7A7A7A"></div>
<div class="t" style="left:585px;top:145px;line-height:19px;height:19px;color:#E60000">Offline Data</div>
<div class="t" style="left:726px;top:142px;line-height:19px;height:19px;">Module OD (AoE</div>
<div class="a" style="left:857px;top:141px;width:65px;height:26px;background:#fff;border:1px solid #7A7A7A"></div>
<div class="t" style="left:860px;top:144px;line-height:19px;height:19px;">0</div>
<div class="a" style="left:403px;top:181px;width:861px;height:351px;background:#fff;border:1px solid #828790;border-right:none;overflow:hidden"></div>
<div class="a" style="left:489px;top:184px;width:1px;height:22px;background:#E5E5E5"></div>
<div class="a" style="left:689px;top:184px;width:1px;height:22px;background:#E5E5E5"></div>
<div class="a" style="left:759px;top:184px;width:1px;height:22px;background:#E5E5E5"></div>
<div class="a" style="left:939px;top:184px;width:1px;height:22px;background:#E5E5E5"></div>
<div class="a" style="left:1009px;top:184px;width:1px;height:22px;background:#E5E5E5"></div>
<div class="t" style="left:411px;top:185px;line-height:19px;height:19px;">Index</div>
<div class="t" style="left:496px;top:185px;line-height:19px;height:19px;">Name</div>
<div class="t" style="left:696px;top:185px;line-height:19px;height:19px;">Flags</div>
<div class="t" style="left:766px;top:185px;line-height:19px;height:19px;">Value</div>
<div class="t" style="left:946px;top:185px;line-height:19px;height:19px;">Unit</div>
<div class="a" style="left:404px;top:207px;width:860px;height:324px;overflow:hidden">
<div class="t" style="left:23px;top:1px">1C32:0</div>
<div class="t" style="left:92px;top:1px">SM output parameter</div>
<div class="t" style="left:292px;top:1px"></div>
<div class="t" style="left:362px;top:1px">> 32 <</div>
<svg style="left:5px;top:6px" width="16" height="9"><rect x="0.5" y="0.5" width="8" height="8" fill="#fff" stroke="#A0A0A0"/><path d="M2 4.5h5" stroke="#000"/><path d="M4.5 2v5" stroke="#000"/><path d="M10 4.5h1M12 4.5h1M14 4.5h1" stroke="#A0A0A0"/></svg>
<div class="a" style="left:9px;top:3px;width:1px;height:1px;background:#A0A0A0"></div><div class="a" style="left:9px;top:17px;width:1px;height:1px;background:#A0A0A0"></div>
<div class="a" style="left:21px;top:21px;width:584px;height:21px;background:#E0FFFF"></div>
<div class="t" style="left:23px;top:22px">1C33:0</div>
<div class="t" style="left:92px;top:22px">SM input parameter</div>
<div class="t" style="left:292px;top:22px"></div>
<div class="t" style="left:362px;top:22px">> 32 <</div>
<svg style="left:5px;top:27px" width="16" height="9"><rect x="0.5" y="0.5" width="8" height="8" fill="#fff" stroke="#A0A0A0"/><path d="M2 4.5h5" stroke="#000"/><path d="M4.5 2v5" stroke="#000"/><path d="M10 4.5h1M12 4.5h1M14 4.5h1" stroke="#A0A0A0"/></svg>
<div class="a" style="left:9px;top:24px;width:1px;height:1px;background:#A0A0A0"></div><div class="a" style="left:9px;top:38px;width:1px;height:1px;background:#A0A0A0"></div>
<div class="t" style="left:23px;top:43px">2000:0</div>
<div class="t" style="left:92px;top:43px">XB6S-3200 Config</div>
<div class="t" style="left:292px;top:43px">RO</div>
<div class="t" style="left:362px;top:43px">> 1 <</div>
<svg style="left:5px;top:48px" width="16" height="9"><rect x="0.5" y="0.5" width="8" height="8" fill="#fff" stroke="#A0A0A0"/><path d="M2 4.5h5" stroke="#000"/><path d="M4.5 2v5" stroke="#000"/><path d="M10 4.5h1M12 4.5h1M14 4.5h1" stroke="#A0A0A0"/></svg>
<div class="a" style="left:9px;top:45px;width:1px;height:1px;background:#A0A0A0"></div><div class="a" style="left:9px;top:59px;width:1px;height:1px;background:#A0A0A0"></div>
<div class="a" style="left:21px;top:63px;width:584px;height:21px;background:#E0FFFF"></div>
<div class="t" style="left:23px;top:64px">2010:0</div>
<div class="t" style="left:92px;top:64px">XB6S-0032A Config</div>
<div class="t" style="left:292px;top:64px">RO</div>
<div class="t" style="left:362px;top:64px">> 33 <</div>
<svg style="left:5px;top:69px" width="16" height="9"><rect x="0.5" y="0.5" width="8" height="8" fill="#fff" stroke="#A0A0A0"/><path d="M2 4.5h5" stroke="#000"/><path d="M4.5 2v5" stroke="#000"/><path d="M10 4.5h1M12 4.5h1M14 4.5h1" stroke="#A0A0A0"/></svg>
<div class="a" style="left:9px;top:66px;width:1px;height:1px;background:#A0A0A0"></div><div class="a" style="left:9px;top:80px;width:1px;height:1px;background:#A0A0A0"></div>
<div class="t" style="left:23px;top:85px">2020:0</div>
<div class="t" style="left:92px;top:85px">XB6S-A80I Config</div>
<div class="t" style="left:292px;top:85px">RO</div>
<div class="t" style="left:362px;top:85px">> 16 <</div>
<svg style="left:5px;top:90px" width="16" height="9"><rect x="0.5" y="0.5" width="8" height="8" fill="#fff" stroke="#A0A0A0"/><path d="M2 4.5h5" stroke="#000"/><path d="M10 4.5h1M12 4.5h1M14 4.5h1" stroke="#A0A0A0"/></svg>
<div class="a" style="left:9px;top:87px;width:1px;height:1px;background:#A0A0A0"></div><div class="a" style="left:9px;top:101px;width:1px;height:1px;background:#A0A0A0"></div>
<div class="a" style="left:37px;top:105px;width:568px;height:21px;background:#E0FFFF"></div>
<div class="t" style="left:39px;top:106px">2020:01</div>
<div class="t" style="left:92px;top:106px">Range Select Ch00</div>
<div class="t" style="left:292px;top:106px">RW</div>
<div class="t" style="left:362px;top:106px">0~20mA(0~65535) (2)</div>
<svg style="left:25px;top:105px" width="12" height="21"><path d="M0.5 4v1M0.5 6v1M0.5 8v1M0.5 10v1M0.5 12v1M0.5 14v1M0.5 16v1M2 10.5h1M4 10.5h1M6 10.5h1M8 10.5h1M10 10.5h1" stroke="#A0A0A0"/></svg>
<div class="t" style="left:39px;top:127px">2020:02</div>
<div class="t" style="left:92px;top:127px">Range Select Ch01</div>
<div class="t" style="left:292px;top:127px">RW</div>
<div class="t" style="left:362px;top:127px">0~20mA(0~65535) (2)</div>
<svg style="left:25px;top:126px" width="12" height="21"><path d="M0.5 4v1M0.5 6v1M0.5 8v1M0.5 10v1M0.5 12v1M0.5 14v1M0.5 16v1M2 10.5h1M4 10.5h1M6 10.5h1M8 10.5h1M10 10.5h1" stroke="#A0A0A0"/></svg>
<div class="a" style="left:37px;top:147px;width:568px;height:21px;background:#E0FFFF"></div>
<div class="t" style="left:39px;top:148px">2020:03</div>
<div class="t" style="left:92px;top:148px">Range Select Ch02</div>
<div class="t" style="left:292px;top:148px">RW</div>
<div class="t" style="left:362px;top:148px">0~20mA(0~65535) (2)</div>
<svg style="left:25px;top:147px" width="12" height="21"><path d="M0.5 4v1M0.5 6v1M0.5 8v1M0.5 10v1M0.5 12v1M0.5 14v1M0.5 16v1M2 10.5h1M4 10.5h1M6 10.5h1M8 10.5h1M10 10.5h1" stroke="#A0A0A0"/></svg>
<div class="t" style="left:39px;top:169px">2020:04</div>
<div class="t" style="left:92px;top:169px">Range Select Ch03</div>
<div class="t" style="left:292px;top:169px">RW</div>
<div class="t" style="left:362px;top:169px">0~20mA(0~65535) (2)</div>
<svg style="left:25px;top:168px" width="12" height="21"><path d="M0.5 4v1M0.5 6v1M0.5 8v1M0.5 10v1M0.5 12v1M0.5 14v1M0.5 16v1M2 10.5h1M4 10.5h1M6 10.5h1M8 10.5h1M10 10.5h1" stroke="#A0A0A0"/></svg>
<div class="a" style="left:37px;top:189px;width:568px;height:21px;background:#E0FFFF"></div>
<div class="t" style="left:39px;top:190px">2020:05</div>
<div class="t" style="left:92px;top:190px">Range Select Ch04</div>
<div class="t" style="left:292px;top:190px">RW</div>
<div class="t" style="left:362px;top:190px">0~20mA(0~65535) (2)</div>
<svg style="left:25px;top:189px" width="12" height="21"><path d="M0.5 4v1M0.5 6v1M0.5 8v1M0.5 10v1M0.5 12v1M0.5 14v1M0.5 16v1M2 10.5h1M4 10.5h1M6 10.5h1M8 10.5h1M10 10.5h1" stroke="#A0A0A0"/></svg>
<div class="t" style="left:39px;top:211px">2020:06</div>
<div class="t" style="left:92px;top:211px">Range Select Ch05</div>
<div class="t" style="left:292px;top:211px">RW</div>
<div class="t" style="left:362px;top:211px">0~20mA(0~65535) (2)</div>
<svg style="left:25px;top:210px" width="12" height="21"><path d="M0.5 4v1M0.5 6v1M0.5 8v1M0.5 10v1M0.5 12v1M0.5 14v1M0.5 16v1M2 10.5h1M4 10.5h1M6 10.5h1M8 10.5h1M10 10.5h1" stroke="#A0A0A0"/></svg>
<div class="a" style="left:37px;top:231px;width:568px;height:21px;background:#E0FFFF"></div>
<div class="t" style="left:39px;top:232px">2020:07</div>
<div class="t" style="left:92px;top:232px">Range Select Ch06</div>
<div class="t" style="left:292px;top:232px">RW</div>
<div class="t" style="left:362px;top:232px">0~20mA(0~65535) (2)</div>
<svg style="left:25px;top:231px" width="12" height="21"><path d="M0.5 4v1M0.5 6v1M0.5 8v1M0.5 10v1M0.5 12v1M0.5 14v1M0.5 16v1M2 10.5h1M4 10.5h1M6 10.5h1M8 10.5h1M10 10.5h1" stroke="#A0A0A0"/></svg>
<div class="t" style="left:39px;top:253px">2020:08</div>
<div class="t" style="left:92px;top:253px">Range Select Ch07</div>
<div class="t" style="left:292px;top:253px">RW</div>
<div class="t" style="left:362px;top:253px">0~20mA(0~65535) (2)</div>
<svg style="left:25px;top:252px" width="12" height="21"><path d="M0.5 4v1M0.5 6v1M0.5 8v1M0.5 10v1M0.5 12v1M0.5 14v1M0.5 16v1M2 10.5h1M4 10.5h1M6 10.5h1M8 10.5h1M10 10.5h1" stroke="#A0A0A0"/></svg>
<div class="a" style="left:37px;top:273px;width:568px;height:21px;background:#E0FFFF"></div>
<div class="t" style="left:39px;top:274px">2020:09</div>
<div class="t" style="left:92px;top:274px">Filter Ch00</div>
<div class="t" style="left:292px;top:274px">RW</div>
<div class="t" style="left:362px;top:274px">0x0000000A (10)</div>
<svg style="left:25px;top:273px" width="12" height="21"><path d="M0.5 4v1M0.5 6v1M0.5 8v1M0.5 10v1M0.5 12v1M0.5 14v1M0.5 16v1M2 10.5h1M4 10.5h1M6 10.5h1M8 10.5h1M10 10.5h1" stroke="#A0A0A0"/></svg>
<div class="t" style="left:39px;top:295px">2020:...</div>
<div class="t" style="left:92px;top:295px">Filter Ch01</div>
<div class="t" style="left:292px;top:295px">RW</div>
<div class="t" style="left:362px;top:295px">0x0000000A (10)</div>
<svg style="left:25px;top:294px" width="12" height="21"><path d="M0.5 4v1M0.5 6v1M0.5 8v1M0.5 10v1M0.5 12v1M0.5 14v1M0.5 16v1M2 10.5h1M4 10.5h1M6 10.5h1M8 10.5h1M10 10.5h1" stroke="#A0A0A0"/></svg>
<div class="a" style="left:37px;top:315px;width:568px;height:21px;background:#E0FFFF"></div>
<div class="t" style="left:39px;top:316px">2020:...</div>
<div class="t" style="left:92px;top:316px">Filter Ch02</div>
<div class="t" style="left:292px;top:316px">RW</div>
<div class="t" style="left:362px;top:316px">0x0000000A (10)</div>
<svg style="left:25px;top:315px" width="12" height="21"><path d="M0.5 4v1M0.5 6v1M0.5 8v1M0.5 10v1M0.5 12v1M0.5 14v1M0.5 16v1M2 10.5h1M4 10.5h1M6 10.5h1M8 10.5h1M10 10.5h1" stroke="#A0A0A0"/></svg>
</div>
<div class="a" style="left:377px;top:554px;width:887px;height:4px;background:#F0F0F0"></div>
<div class="a" style="left:377px;top:554px;width:1px;height:4px;background:#9AA5C0"></div>
<div class="a" style="left:377px;top:558px;width:887px;height:135px;background:#9AA5C0"></div>
<div class="a" style="left:378px;top:558px;width:886px;height:134px;background:#A0A0A0"></div>
<div class="a" style="left:379px;top:559px;width:885px;height:133px;background:#696969"></div>
<div class="a" style="left:378px;top:691px;width:886px;height:2px;background:#FFFFFF"></div>
<div class="a" style="left:379px;top:691px;width:885px;height:1px;background:#E3E3E3"></div>
<div class="a" style="left:380px;top:560px;width:884px;height:131px;background:#fff"></div>
<div class="a" style="left:500px;top:561px;width:1px;height:23px;background:#E5E5E5"></div>
<div class="a" style="left:519px;top:561px;width:1px;height:23px;background:#E5E5E5"></div>
<div class="a" style="left:639px;top:561px;width:1px;height:23px;background:#E5E5E5"></div>
<div class="a" style="left:719px;top:561px;width:1px;height:23px;background:#E5E5E5"></div>
<div class="a" style="left:769px;top:561px;width:1px;height:23px;background:#E5E5E5"></div>
<div class="a" style="left:827px;top:561px;width:1px;height:23px;background:#E5E5E5"></div>
<div class="a" style="left:877px;top:561px;width:1px;height:23px;background:#E5E5E5"></div>
<div class="a" style="left:927px;top:561px;width:1px;height:23px;background:#E5E5E5"></div>
<div class="a" style="left:1077px;top:561px;width:1px;height:23px;background:#E5E5E5"></div>
<div class="t" style="left:387px;top:562px;line-height:19px;height:19px;">Name</div>
<div class="t" style="left:526px;top:562px;line-height:19px;height:19px;">Online</div>
<div class="t" style="left:646px;top:562px;line-height:19px;height:19px;">Type</div>
<div class="t" style="left:726px;top:562px;line-height:19px;height:19px;">Size</div>
<div class="t" style="left:776px;top:562px;line-height:19px;height:19px;">&gt;Add...</div>
<div class="t" style="left:834px;top:562px;line-height:19px;height:19px;">In/Out</div>
<div class="t" style="left:884px;top:562px;line-height:19px;height:19px;">User...</div>
<div class="t" style="left:934px;top:562px;line-height:19px;height:19px;">Linked to</div>
<svg style="left:384px;top:587px" width="16" height="16" viewBox="0 0 16 16"><defs><linearGradient id="vi0" x1="0" y1="0" x2="1" y2="1"><stop offset="0" stop-color="#F4FA60"/><stop offset="1" stop-color="#F8E040"/></linearGradient></defs><rect x="3.5" y="3.5" width="9.2" height="8.2" fill="url(#vi0)" stroke="#E4B400" stroke-width="1"/><path d="M0.8 5.2h4.8v2.5H0.8z" fill="#F45C3C"/><path d="M4.8 2.7L10.2 6.45 4.8 10.4 5.8 6.45z" fill="#E42424"/></svg>
<div class="t" style="left:402px;top:585px;line-height:19px;height:19px;">CouplerState</div>
<div class="t" style="left:646px;top:585px;line-height:19px;height:19px;">UINT</div>
<div class="t" style="left:726px;top:585px;line-height:19px;height:19px;">2.0</div>
<div class="t" style="left:776px;top:585px;line-height:19px;height:19px;">39.0</div>
<div class="t" style="left:834px;top:585px;line-height:19px;height:19px;">Input</div>
<div class="t" style="left:884px;top:585px;line-height:19px;height:19px;">0</div>
<svg style="left:384px;top:608px" width="16" height="16" viewBox="0 0 16 16"><defs><linearGradient id="vi1" x1="0" y1="0" x2="1" y2="1"><stop offset="0" stop-color="#F4FA60"/><stop offset="1" stop-color="#F8E040"/></linearGradient></defs><rect x="3.5" y="3.5" width="9.2" height="8.2" fill="url(#vi1)" stroke="#E4B400" stroke-width="1"/><path d="M0.8 5.2h4.8v2.5H0.8z" fill="#F45C3C"/><path d="M4.8 2.7L10.2 6.45 4.8 10.4 5.8 6.45z" fill="#E42424"/></svg>
<div class="t" style="left:402px;top:606px;line-height:19px;height:19px;">Channel 0</div>
<div class="t" style="left:646px;top:606px;line-height:19px;height:19px;">BIT</div>
<div class="t" style="left:726px;top:606px;line-height:19px;height:19px;">0.1</div>
<div class="t" style="left:776px;top:606px;line-height:19px;height:19px;">41.0</div>
<div class="t" style="left:834px;top:606px;line-height:19px;height:19px;">Input</div>
<div class="t" style="left:884px;top:606px;line-height:19px;height:19px;">0</div>
<svg style="left:384px;top:629px" width="16" height="16" viewBox="0 0 16 16"><defs><linearGradient id="vi2" x1="0" y1="0" x2="1" y2="1"><stop offset="0" stop-color="#F4FA60"/><stop offset="1" stop-color="#F8E040"/></linearGradient></defs><rect x="3.5" y="3.5" width="9.2" height="8.2" fill="url(#vi2)" stroke="#E4B400" stroke-width="1"/><path d="M0.8 5.2h4.8v2.5H0.8z" fill="#F45C3C"/><path d="M4.8 2.7L10.2 6.45 4.8 10.4 5.8 6.45z" fill="#E42424"/></svg>
<div class="t" style="left:402px;top:627px;line-height:19px;height:19px;">Channel 1</div>
<div class="t" style="left:646px;top:627px;line-height:19px;height:19px;">BIT</div>
<div class="t" style="left:726px;top:627px;line-height:19px;height:19px;">0.1</div>
<div class="t" style="left:776px;top:627px;line-height:19px;height:19px;">41.1</div>
<div class="t" style="left:834px;top:627px;line-height:19px;height:19px;">Input</div>
<div class="t" style="left:884px;top:627px;line-height:19px;height:19px;">0</div>
<svg style="left:384px;top:650px" width="16" height="16" viewBox="0 0 16 16"><defs><linearGradient id="vi3" x1="0" y1="0" x2="1" y2="1"><stop offset="0" stop-color="#F4FA60"/><stop offset="1" stop-color="#F8E040"/></linearGradient></defs><rect x="3.5" y="3.5" width="9.2" height="8.2" fill="url(#vi3)" stroke="#E4B400" stroke-width="1"/><path d="M0.8 5.2h4.8v2.5H0.8z" fill="#F45C3C"/><path d="M4.8 2.7L10.2 6.45 4.8 10.4 5.8 6.45z" fill="#E42424"/></svg>
<div class="t" style="left:402px;top:648px;line-height:19px;height:19px;">Channel 2</div>
<div class="t" style="left:646px;top:648px;line-height:19px;height:19px;">BIT</div>
<div class="t" style="left:726px;top:648px;line-height:19px;height:19px;">0.1</div>
<div class="t" style="left:776px;top:648px;line-height:19px;height:19px;">41.2</div>
<div class="t" style="left:834px;top:648px;line-height:19px;height:19px;">Input</div>
<div class="t" style="left:884px;top:648px;line-height:19px;height:19px;">0</div>
<svg style="left:384px;top:671px" width="16" height="16" viewBox="0 0 16 16"><defs><linearGradient id="vi4" x1="0" y1="0" x2="1" y2="1"><stop offset="0" stop-color="#F4FA60"/><stop offset="1" stop-color="#F8E040"/></linearGradient></defs><rect x="3.5" y="3.5" width="9.2" height="8.2" fill="url(#vi4)" stroke="#E4B400" stroke-width="1"/><path d="M0.8 5.2h4.8v2.5H0.8z" fill="#F45C3C"/><path d="M4.8 2.7L10.2 6.45 4.8 10.4 5.8 6.45z" fill="#E42424"/></svg>
<div class="t" style="left:402px;top:669px;line-height:19px;height:19px;">Channel 3</div>
<div class="t" style="left:646px;top:669px;line-height:19px;height:19px;">BIT</div>
<div class="t" style="left:726px;top:669px;line-height:19px;height:19px;">0.1</div>
<div class="t" style="left:776px;top:669px;line-height:19px;height:19px;">41.3</div>
<div class="t" style="left:834px;top:669px;line-height:19px;height:19px;">Input</div>
<div class="t" style="left:884px;top:669px;line-height:19px;height:19px;">0</div>
<div class="a" style="left:377px;top:700px;width:887px;height:201px;background:#9AA5C0"></div>
<div class="a" style="left:378px;top:701px;width:886px;height:23px;background:#FFF29D"></div>
<div class="t" style="left:382px;top:703px;line-height:19px;height:19px;">Error List</div>
<div class="a" style="left:378px;top:724px;width:886px;height:27px;background:#CFD6E5"></div>
<div class="a" style="left:378px;top:751px;width:886px;height:24px;background:#F5F5F5"></div>
<div class="a" style="left:378px;top:775px;width:886px;height:1px;background:#CCCEDB"></div>
<div class="a" style="left:378px;top:776px;width:886px;height:125px;background:#fff"></div>
<div class="a" style="left:394px;top:751px;width:1px;height:24px;background:#E0E0E0"></div>
<div class="a" style="left:412px;top:751px;width:1px;height:24px;background:#E0E0E0"></div>
<div class="t" style="left:418px;top:754px;line-height:19px;height:19px;">Description</div>
<svg style="left:494px;top:759px" width="11" height="7" viewBox="0 0 11 7"><path d="M0.5 6.5l5-5 5 5z" fill="#717171"/></svg>
<div class="a" style="left:420px;top:728px;width:1px;height:20px;background:#8591A8"></div>
<div class="a" style="left:506px;top:728px;width:1px;height:20px;background:#8591A8"></div>
<div class="a" style="left:611px;top:728px;width:1px;height:20px;background:#8591A8"></div>
<div class="a" style="left:720px;top:728px;width:1px;height:20px;background:#8591A8"></div>
<svg style="left:388px;top:732px" width="12" height="11" viewBox="0 0 12 11"><path d="M0.5 0.8h10.5L7 5v5.3H4.6V5z" fill="#333"/></svg>
<svg style="left:408px;top:736px" width="7" height="5" viewBox="0 0 7 5"><path d="M0.2 0.6h6.2L3.3 3.6z" fill="#1E2D50"/></svg>
<svg style="left:429px;top:731px" width="15" height="15" viewBox="0 0 15 15"><circle cx="7.2" cy="7.2" r="7" fill="#B4B9C4"/><path d="M4.2 4.2l6 6M10.2 4.2l-6 6" stroke="#E6E9EF" stroke-width="1.8"/></svg>
<svg style="left:514px;top:731px" width="16" height="15" viewBox="0 0 16 15"><path d="M8 0.8L15.3 13.8H0.7z" fill="#C4C9D4"/><path d="M8 4.5v5" stroke="#8C919C" stroke-width="1.8"/><rect x="7.1" y="10.8" width="1.8" height="1.8" fill="#8C919C"/></svg>
<svg style="left:620px;top:731px" width="15" height="15" viewBox="0 0 15 15"><circle cx="7.2" cy="7.2" r="7" fill="#B4B9C4"/><rect x="6.2" y="6" width="2" height="6" fill="#E6E9EF"/><rect x="6.2" y="3" width="2" height="2" fill="#E6E9EF"/></svg>
<div class="t" style="left:447px;top:728px;line-height:19px;height:19px;color:#717171">0 Errors</div>
<div class="t" style="left:533px;top:728px;line-height:19px;height:19px;color:#717171">0 Warnings</div>
<div class="t" style="left:638px;top:728px;line-height:19px;height:19px;color:#717171">0 Messages</div>
<div class="t" style="left:731px;top:728px;line-height:19px;height:19px;color:#717171">Clear</div>
<div class="a" style="left:743px;top:27px;width:95px;height:36px;border:4px solid #F74E4E;border-radius:2px"></div>
<div class="a" style="left:402px;top:290px;width:513px;height:197px;border:4px solid #F74E4E;border-radius:2px"></div>
<div class="a" style="left:37px;top:652px;width:309px;height:249px;border:4px solid #F74E4E;border-radius:2px"></div>
</body></html>
